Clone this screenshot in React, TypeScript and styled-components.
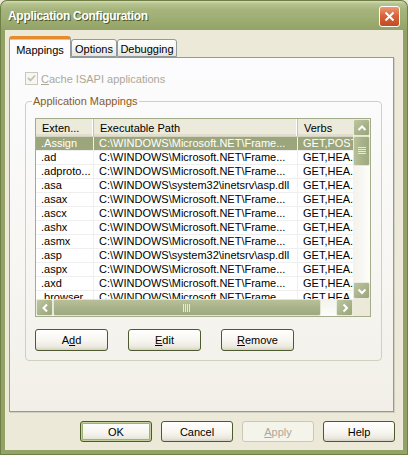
import React from "react";
import styled, { createGlobalStyle } from "styled-components";

const GlobalStyle = createGlobalStyle`
	html, body {
		margin: 0;
		padding: 0;
		background: #ece9d8;
	}
	* {
		box-sizing: border-box;
	}
`;

const Window = styled.div`
	width: 408px;
	height: 455px;
	display: flex;
	flex-direction: column;
	font-family: "Liberation Sans", Arial, sans-serif;
	font-size: 11px;
	color: #000;
	background: #8e9e62;
	border-radius: 7px 7px 0 0;
	overflow: hidden;
`;

const TitleBar = styled.div`
	height: 30px;
	flex: none;
	display: flex;
	align-items: center;
	justify-content: space-between;
	padding: 1px 7px 0 7px;
	background: linear-gradient(
		to bottom,
		#d4dcb6 0%,
		#b6c38f 10%,
		#a5b47c 30%,
		#9dad72 65%,
		#93a367 100%
	);
	border: 1px solid #6f7f45;
	border-bottom: none;
	border-radius: 7px 7px 0 0;
`;

const TitleText = styled.span`
	font-family: "Liberation Sans", Arial, sans-serif;
	font-weight: bold;
	font-size: 12px;
	color: #fff;
	letter-spacing: -0.3px;
	text-shadow: 1px 1px 0 #4e5a2c;
`;

const CloseButton = styled.div`
	width: 21px;
	height: 21px;
	border: 1px solid #fff;
	border-radius: 3px;
	background: linear-gradient(to bottom, #ec9a72 0%, #d9643a 45%, #c24b20 100%);
	display: flex;
	align-items: center;
	justify-content: center;
`;

const Frame = styled.div`
	flex: 1;
	display: flex;
	padding: 0 4px 4px 4px;
	background: #93a367;
	border: 1px solid #6f7f45;
	border-top: none;
`;

const Client = styled.div`
	flex: 1;
	display: flex;
	flex-direction: column;
	background: #ece9d8;
	padding: 6px 8px 8px 4px;
`;

const TabStrip = styled.div`
	display: flex;
	align-items: flex-end;
	height: 21px;
	position: relative;
	z-index: 1;
`;

const Tab = styled.div<{ $active?: boolean; $w: number }>`
	width: ${(p) => p.$w}px;
	height: ${(p) => (p.$active ? 22 : 18)}px;
	margin-bottom: ${(p) => (p.$active ? -1 : 0)}px;
	display: flex;
	align-items: center;
	justify-content: center;
	padding-top: ${(p) => (p.$active ? 2 : 1)}px;
	border: 1px solid #919b9c;
	border-bottom: ${(p) => (p.$active ? "none" : "1px solid #919b9c")};
	border-top: ${(p) => (p.$active ? "3px solid #e68b2c" : "1px solid #919b9c")};
	border-radius: 3px 3px 0 0;
	background: ${(p) =>
		p.$active
			? "#fcfcfe"
			: "linear-gradient(to bottom, #ffffff 0%, #f3f3ef 60%, #e6e4da 100%)"};
	box-shadow: ${(p) => (p.$active ? "inset 0 1px 0 #ffc73c" : "none")};
`;

const Panel = styled.div`
	flex: 1;
	margin-right: 1px;
	border: 1px solid #919b9c;
	background: linear-gradient(to bottom, #fcfcfe 0%, #f7f6f2 60%, #f1efe7 100%);
	box-shadow: 1px 1px 0 #d0cebf;
	padding: 14px 11px 0 15px;
	display: flex;
	flex-direction: column;
`;

const CheckRow = styled.div`
	display: flex;
	align-items: center;
	gap: 3px;
	height: 13px;
	margin-bottom: 10px;
	color: #aca899;
`;

const CheckBox = styled.div`
	width: 13px;
	height: 13px;
	border: 1px solid #cac8bb;
	background: #f7f6f1;
	display: flex;
	align-items: center;
	justify-content: center;
`;

const GroupBox = styled.fieldset`
	margin: 0;
	min-width: 0;
	height: 266px;
	padding: 10px 10px 8px 9px;
	border: 1px solid #d0d0bf;
	border-radius: 4px;
	display: flex;
	flex-direction: column;
`;

const Legend = styled.legend`
	padding: 0 1px;
	margin-left: -3px;
	line-height: 13px;
	color: #8a5a25;
`;

const ListView = styled.div`
	height: 199px;
	border: 1px solid #a5ac8c;
	background: #fff;
	display: grid;
	grid-template-columns: 1fr 17px;
	grid-template-rows: 1fr 17px;
`;

const ListBody = styled.div`
	overflow: hidden;
	min-width: 0;
`;

const HeaderRow = styled.div`
	display: flex;
	height: 18px;
	background: #ebeadb;
	border-bottom: 1px solid #d6d2c2;
	box-shadow: inset 0 -2px 0 #e2decd;
	width: 360px;
`;

const HeaderCell = styled.div<{ $w: number }>`
	flex: none;
	width: ${(p) => p.$w}px;
	padding: 0 6px;
	display: flex;
	align-items: center;
	border-right: 1px solid #c7c5b2;
	box-shadow: inset -1px 0 0 #fff;
	white-space: nowrap;
	overflow: hidden;
`;

const Row = styled.div<{ $selected?: boolean }>`
	display: flex;
	height: 14px;
	width: 360px;
	background: ${(p) => (p.$selected ? "#9ca67c" : "#fff")};
	color: ${(p) => (p.$selected ? "#fff" : "#000")};
	border-bottom: 1px solid #efefef;
`;

const Cell = styled.div<{ $w: number }>`
	flex: none;
	width: ${(p) => p.$w}px;
	padding: 0 5px;
	line-height: 13px;
	border-right: 1px solid #efefef;
	white-space: nowrap;
	overflow: hidden;
`;

const VScroll = styled.div`
	display: flex;
	flex-direction: column;
	background: linear-gradient(to right, #f3f2ec, #fdfdfa);
`;

const HScroll = styled.div`
	display: flex;
	background: linear-gradient(to bottom, #f3f2ec, #fdfdfa);
`;

const ScrollBtn = styled.div`
	flex: none;
	width: 17px;
	height: 17px;
	border: 1px solid #e9ecdd;
	border-radius: 2px;
	background: linear-gradient(135deg, #bcc59f 0%, #a7b189 60%, #9aa57c 100%);
	display: flex;
	align-items: center;
	justify-content: center;
`;

const Thumb = styled.div<{ $vertical?: boolean; $size: number }>`
	flex: none;
	${(p) => (p.$vertical ? `height: ${p.$size}px;` : `width: ${p.$size}px;`)}
	border: 1px solid #e2e7d2;
	border-radius: 2px;
	background: ${(p) =>
		p.$vertical
			? "linear-gradient(to right, #b7c097, #a9b38b 50%, #9fa980)"
			: "linear-gradient(to bottom, #b7c097, #a9b38b 50%, #9fa980)"};
	display: flex;
	align-items: center;
	justify-content: center;
`;

const Track = styled.div`
	flex: 1;
`;

const Corner = styled.div`
	background: #ece9d8;
`;

const ButtonRow = styled.div`
	display: flex;
	gap: 20px;
	margin-top: 12px;
`;

const Footer = styled.div`
	display: flex;
	justify-content: flex-end;
	gap: 9px;
	margin-top: 9px;
`;

const Button = styled.div<{ $default?: boolean; $disabled?: boolean; $h: number }>`
	width: ${(p) => (p.$h === 22 ? 73 : 72)}px;
	height: ${(p) => p.$h}px;
	display: flex;
	align-items: center;
	justify-content: center;
	border: 1px solid ${(p) => (p.$disabled ? "#c9c7ba" : "#4c5a2e")};
	border-radius: 3px;
	color: ${(p) => (p.$disabled ? "#aca899" : "#000")};
	background: ${(p) =>
		p.$disabled
			? "#f5f4ea"
			: "linear-gradient(to bottom, #ffffff 0%, #f6f5ef 55%, #ebe8dd 85%, #d6d0c5 100%)"};
	box-shadow: ${(p) =>
		p.$default ? "inset 0 0 0 1px #c2d19c, inset 0 0 0 2px #a0b472" : "none"};
`;

const Chevron = ({ dir }: { dir: "up" | "down" | "left" | "right" }) => {
	const pts = {
		up: "4.5,10 8,6.5 11.5,10",
		down: "4.5,6.5 8,10 11.5,6.5",
		left: "10,4.5 6.5,8 10,11.5",
		right: "6.5,4.5 10,8 6.5,11.5",
	}[dir];
	return (
		<svg width="15" height="15" viewBox="0 0 15 15">
			<polyline points={pts} fill="none" stroke="#fff" strokeWidth="2" />
		</svg>
	);
};

const Grip = ({ vertical }: { vertical?: boolean }) => (
	<svg width={8} height={8} viewBox="0 0 8 8">
		{[0, 2, 4, 6].map((i) =>
			vertical ? (
				<line key={i} x1="0" y1={i + 0.5} x2="8" y2={i + 0.5} stroke="#e6eadb" />
			) : (
				<line key={i} x1={i + 0.5} y1="0" x2={i + 0.5} y2="8" stroke="#e6eadb" />
			)
		)}
	</svg>
);

const NET = "C:\\WINDOWS\\Microsoft.NET\\Frame...";
const ASP = "C:\\WINDOWS\\system32\\inetsrv\\asp.dll";
const HEAD = "GET,HEA...";

const rows = [
	[".Assign", NET, "GET,POST"],
	[".ad", NET, HEAD],
	[".adproto...", NET, HEAD],
	[".asa", ASP, HEAD],
	[".asax", NET, HEAD],
	[".ascx", NET, HEAD],
	[".ashx", NET, HEAD],
	[".asmx", NET, HEAD],
	[".asp", ASP, HEAD],
	[".aspx", NET, HEAD],
	[".axd", NET, HEAD],
	[".browser", NET, HEAD],
];

const widths = [58, 204, 98];

export default function App() {
	return (
		<>
			<GlobalStyle />
			<Window>
				<TitleBar>
					<TitleText>Application Configuration</TitleText>
					<CloseButton>
						<svg width="13" height="13" viewBox="0 0 13 13">
							<path d="M2.5 2.5 L10.5 10.5 M10.5 2.5 L2.5 10.5" stroke="#fff" strokeWidth="2" />
						</svg>
					</CloseButton>
				</TitleBar>
				<Frame>
					<Client>
						<TabStrip>
							<Tab $active $w={62}>Mappings</Tab>
							<Tab $w={46}>Options</Tab>
							<Tab $w={60}>Debugging</Tab>
						</TabStrip>
						<Panel>
							<CheckRow>
								<CheckBox>
									<svg width="9" height="9" viewBox="0 0 9 9">
										<polyline points="1,4 3.5,6.5 8,1.5" fill="none" stroke="#c3c1b3" strokeWidth="1.8" />
									</svg>
								</CheckBox>
								<span>
									<u>C</u>ache ISAPI applications
								</span>
							</CheckRow>
							<GroupBox>
								<Legend>Application Mappings</Legend>
								<ListView>
									<ListBody>
										<HeaderRow>
											<HeaderCell $w={widths[0]}>Exten...</HeaderCell>
											<HeaderCell $w={widths[1]}>Executable Path</HeaderCell>
											<HeaderCell $w={widths[2]}>Verbs</HeaderCell>
										</HeaderRow>
										{rows.map((r, i) => (
											<Row key={r[0]} $selected={i === 0}>
												{r.map((c, j) => (
													<Cell key={j} $w={widths[j]}>
														{c}
													</Cell>
												))}
											</Row>
										))}
									</ListBody>
									<VScroll>
										<ScrollBtn>
											<Chevron dir="up" />
										</ScrollBtn>
										<Thumb $vertical $size={30}>
											<Grip vertical />
										</Thumb>
										<Track />
										<ScrollBtn>
											<Chevron dir="down" />
										</ScrollBtn>
									</VScroll>
									<HScroll>
										<ScrollBtn>
											<Chevron dir="left" />
										</ScrollBtn>
										<Thumb $size={268}>
											<Grip />
										</Thumb>
										<Track />
										<ScrollBtn>
											<Chevron dir="right" />
										</ScrollBtn>
									</HScroll>
									<Corner />
								</ListView>
								<ButtonRow>
									<Button $h={22}>
										<span>
											A<u>d</u>d
										</span>
									</Button>
									<Button $h={22}>
										<span>
											<u>E</u>dit
										</span>
									</Button>
									<Button $h={22}>
										<span>
											<u>R</u>emove
										</span>
									</Button>
								</ButtonRow>
							</GroupBox>
						</Panel>
						<Footer>
							<Button $h={21} $default>
								OK
							</Button>
							<Button $h={21}>Cancel</Button>
							<Button $h={21} $disabled>
								<span>
									<u>A</u>pply
								</span>
							</Button>
							<Button $h={21}>Help</Button>
						</Footer>
					</Client>
				</Frame>
			</Window>
		</>
	);
}
